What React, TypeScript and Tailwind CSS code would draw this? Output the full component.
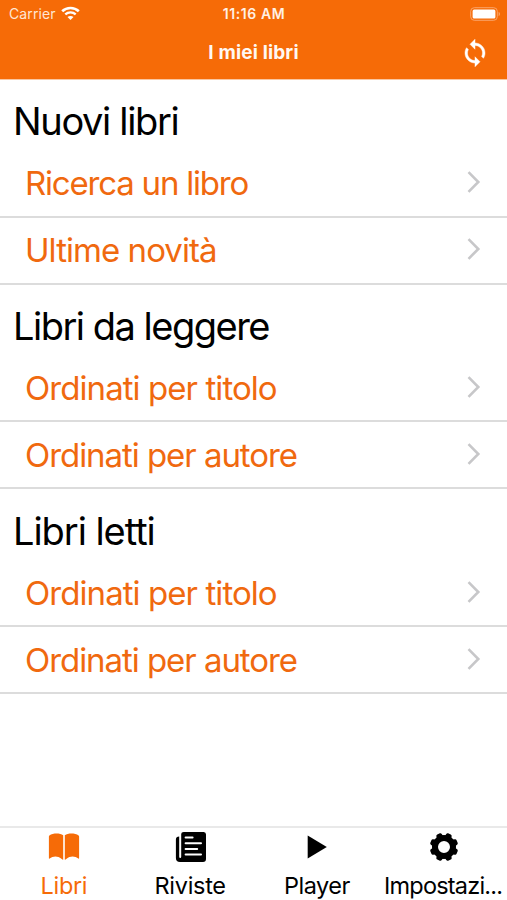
const sections = [
  {
    title: "Nuovi libri",
    titleStyle: "tracking-[-1.35px]",
    rows: [
      { label: "Ricerca un libro", style: "tracking-[-1.2px]" },
      { label: "Ultime novità", style: "tracking-[-0.95px]" },
    ],
  },
  {
    title: "Libri da leggere",
    titleStyle: "tracking-[-1.5px]",
    rows: [
      { label: "Ordinati per titolo", style: "tracking-[-0.93px]" },
      { label: "Ordinati per autore", style: "tracking-[-1.05px]" },
    ],
  },
  {
    title: "Libri letti",
    titleStyle: "tracking-[-1.05px]",
    rows: [
      { label: "Ordinati per titolo", style: "tracking-[-0.93px]" },
      { label: "Ordinati per autore", style: "tracking-[-1.05px]" },
    ],
  },
]

const WifiIcon = () => (
  <svg width="19" height="15" viewBox="0 0 19 15" fill="none" stroke="white">
    <path d="M1.2 5.2C5.8 .9 13.2 .9 17.8 5.2" strokeWidth="2.7" />
    <path d="M4.3 8.4C7.3 5.7 11.7 5.7 14.7 8.4" strokeWidth="2.4" />
    <path d="M9.5 14L6.5 11C8.2 9.5 10.8 9.5 12.5 11Z" fill="white" stroke="none" />
  </svg>
)

const BatteryIcon = () => (
  <svg width="31" height="14" viewBox="0 0 31 14">
    <rect x=".7" y=".7" width="26.6" height="12.6" rx="3.6" fill="none" stroke="#faa469" strokeWidth="1" />
    <rect x="2.6" y="2.6" width="22.8" height="8.8" rx="1.5" fill="white" />
    <path d="M28.6 4.8C30.5 5.6 30.5 8.4 28.6 9.2Z" fill="#faa469" />
  </svg>
)

const SyncIcon = () => (
  <svg width="30" height="30" viewBox="0 0 24 24" fill="white" stroke="white" strokeWidth=".35">
    <path d="M12 4V1L8 5l4 4V6c3.31 0 6 2.69 6 6 0 1.01-.25 1.97-.7 2.8l1.46 1.46C19.54 15.03 20 13.57 20 12c0-4.42-3.58-8-8-8z" />
    <path d="M12 18c-3.31 0-6-2.69-6-6 0-1.01.25-1.97.7-2.8L5.24 7.74C4.46 8.97 4 10.43 4 12c0 4.42 3.58 8 8 8v3l4-4-4-4v3z" />
  </svg>
)

const Chevron = () => (
  <svg className="mb-[2px]" width="14" height="22" viewBox="0 0 14 22" fill="none" stroke="#c7c7c9" strokeWidth="2.6">
    <path d="M1.5 1.2L11.3 11L1.5 20.8" />
  </svg>
)

const BookIcon = () => (
  <svg width="32" height="32" viewBox="0 0 32 32" fill="currentColor">
    <path d="M15.2 4.2C12 1.9 5 1.9 1.4 4.4Q.9 4.8 .9 5.4V27.3Q.9 28.1 1.6 27.6C5 24.9 9.8 24.8 13.4 27.7Q14.4 28.6 15.2 28.8Z" />
    <path d="M16.8 4.2C20 1.9 27 1.9 30.6 4.4Q31.1 4.8 31.1 5.4V27.3Q31.1 28.1 30.4 27.6C27 24.9 22.2 24.8 18.6 27.7Q17.6 28.6 16.8 28.8Z" />
  </svg>
)

const NewsIcon = () => (
  <svg className="ml-[1px]" width="32" height="32" viewBox="0 0 32 32" fill="currentColor">
    <path d="M4.2 5.6Q.9 5.6 .9 8.5V27Q.9 31 5 31H28Q31 31 31 28V3.5Q31 1 28.8 1H8.7Q6.2 1 6.2 3V25.7Q6.2 27 5.2 27Q4.2 27 4.2 25.7Z" />
    <path d="M10.6 6.5H17.6M10.6 12.3H26M10.6 17.9H22.2M10.6 23.6H26" fill="none" stroke="white" strokeWidth="2" strokeLinecap="round" />
  </svg>
)

const PlayIcon = () => (
  <svg width="32" height="32" viewBox="0 0 32 32" fill="currentColor">
    <path d="M6.7 4.6L25.8 16L6.7 27.6Z" />
  </svg>
)

const GearIcon = () => (
  <svg width="32" height="32" viewBox="0 0 32 32" fill="currentColor">
    <circle cx="16" cy="16" r="9" fill="none" stroke="currentColor" strokeWidth="6" />
    {[22.5, 67.5, 112.5, 157.5, 202.5, 247.5, 292.5, 337.5].map((angle) => (
      <path
        key={angle}
        d="M12.4 6L13.1 3Q13.4 1.8 14.6 1.8H17.4Q18.6 1.8 18.9 3L19.6 6Z"
        transform={`rotate(${angle} 16 16)`}
      />
    ))}
  </svg>
)

const tabs = [
  { label: "Libri", icon: <BookIcon />, active: true, style: "tracking-[-0.35px]" },
  { label: "Riviste", icon: <NewsIcon />, active: false, style: "tracking-[-0.3px]" },
  { label: "Player", icon: <PlayIcon />, active: false, style: "tracking-[-0.5px]" },
  { label: "Impostazi...", icon: <GearIcon />, active: false, style: "tracking-[-0.8px] pr-[1px]" },
]

const Header = () => (
  <header className="h-[80px] bg-[#f66b07] border-b border-[#fac6a0] text-white">
    <div className="grid grid-cols-3 items-center h-[27px] pl-[9px] pr-[6px]">
      <div className="flex items-center gap-[5px] text-[14px] text-[#ffe6d3] tracking-[0.1px]">
        Carrier
        <WifiIcon />
      </div>
      <span className="pr-[2px] text-center text-[14px] font-semibold text-[#fff0e4] tracking-[0.6px]">
        11:16 AM
      </span>
      <div className="flex justify-end">
        <BatteryIcon />
      </div>
    </div>
    <div className="grid grid-cols-3 items-center h-[52px] px-[17px]">
      <h1 className="col-start-2 text-center text-[19px] font-bold tracking-[0.15px] text-[#fff8f2]">
        I miei libri
      </h1>
      <button className="justify-self-end">
        <SyncIcon />
      </button>
    </div>
  </header>
)

const App = () => {
  return (
    <div className="flex flex-col w-full h-[900px] bg-white text-black overflow-hidden font-['Inter',sans-serif]">
      <Header />
      <main className="flex-1">
        {sections.map(({ title, titleStyle, rows }) => (
          <section key={title} className="h-[204.7px]">
            <h2
              className={`h-[71px] pl-[13px] pt-[13.4px] text-[38px] leading-[56px] ${titleStyle}`}
            >
              {title}
            </h2>
            {rows.map(({ label, style }) => (
              <div
                key={label}
                className="flex items-center justify-between h-[66.8px] pl-[25px] pr-[26px] border-b-2 border-[#dcdcdc] text-[33px] text-[#f0690f]"
              >
                <span className={`pt-[1.6px] ${style}`}>{label}</span>
                <Chevron />
              </div>
            ))}
          </section>
        ))}
      </main>
      <nav className="grid grid-cols-4 h-[74px] border-t-2 border-[#e9e9e9]">
        {tabs.map(({ label, icon, active, style }) => (
          <div
            key={label}
            className={
              active
                ? "flex flex-col items-center pt-[3px] pl-[1px] text-[#f66b07]"
                : "flex flex-col items-center pt-[3px]"
            }
          >
            {icon}
            <span className={`mt-[7px] text-[23.5px] leading-[32px] ${style}`}>
              {label}
            </span>
          </div>
        ))}
      </nav>
    </div>
  )
}

export default App
